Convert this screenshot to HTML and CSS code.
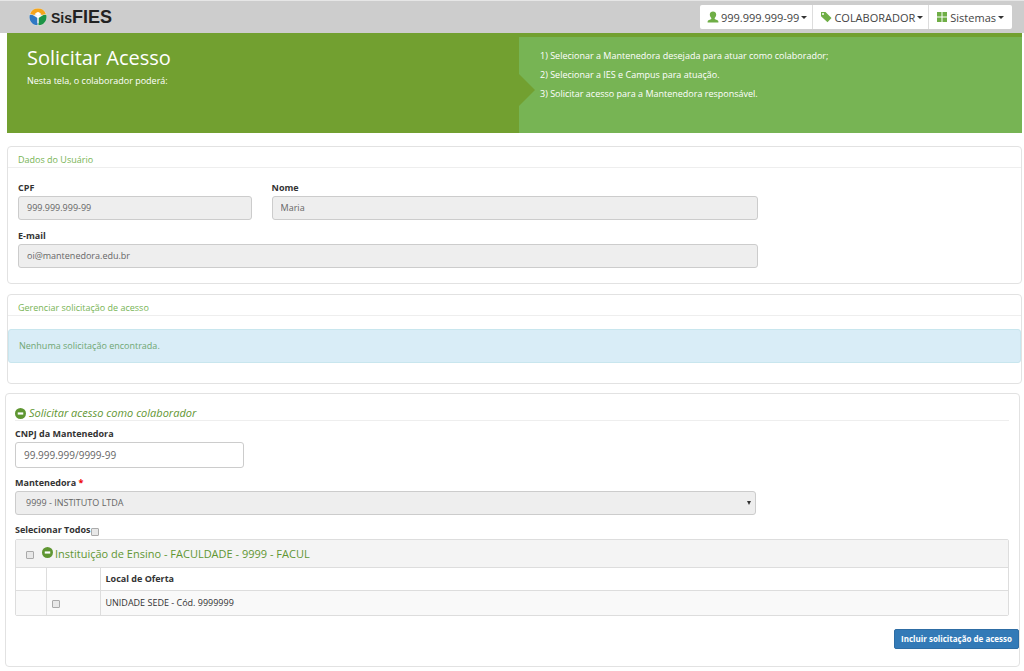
FILE: index.html
```html
<!DOCTYPE html>
<html lang="pt-BR">
<head>
<meta charset="utf-8">
<meta name="viewport" content="width=device-width, initial-scale=1">
<title>SisFIES - Solicitar Acesso</title>
<link rel="stylesheet" href="styles.css">
</head>
<body>
<header class="topbar">
  <a class="brand" href="#">
    <svg class="brand-mark" viewBox="0 0 18 18" aria-hidden="true">
      <circle cx="9" cy="9" r="9" fill="#e6e4dc"/>
      <path d="M1.200 6A8.300 8.300 0 0 1 16.800 6L12.500 7L11.500 5H6.500L5.500 7Z" fill="#f4a51c"/>
      <path d="M.8 6.800L3.500 7L8.500 10V17.300A8.300 8.300 0 0 1 .8 6.800Z" fill="#2f78c4"/>
      <path d="M17.200 6.800L14.500 7L9.500 10V17.300A8.300 8.300 0 0 0 17.200 6.800Z" fill="#1c9447"/>
      <circle cx="9" cy="6" r="2" fill="#fff"/>
      <path d="M5 7L9 8L13 7L9.500 9.800V15H8.500V9.800Z" fill="#fff"/>
    </svg>
    <span class="brand-sis">Sis</span><span class="brand-fies">FIES</span>
  </a>
  <nav class="menu" aria-label="Menu do usuário">
    <button class="menu-item" type="button">
      <svg class="icon" viewBox="0 0 12 12" aria-hidden="true"><path d="M6 .5C4.200 .5 2.800 1.700 2.800 3.500C2.800 5 3.500 6.300 4.300 7V8C3.300 8.600 .6 9.200 .6 10.400V11.500H11.400V10.400C11.400 9.200 8.700 8.600 7.700 8V7C8.500 6.300 9.200 5 9.200 3.500C9.200 1.700 7.800 .5 6 .5Z"/></svg>
      <span>999.999.999-99</span><span class="caret"></span>
    </button>
    <button class="menu-item" type="button">
      <svg class="icon" viewBox="0 0 12 12" aria-hidden="true"><path fill-rule="evenodd" d="M1 1H5.500L11.500 7L7.500 11.300L1 5.300ZM3 2A1 1 0 1 0 3 4A1 1 0 1 0 3 2Z"/></svg>
      <span>COLABORADOR</span><span class="caret"></span>
    </button>
    <button class="menu-item" type="button">
      <svg class="icon" viewBox="0 0 12 12" aria-hidden="true"><path d="M1 1H5.500V5.500H1ZM6.500 1H11V5.500H6.500ZM1 6.500H5.500V11H1ZM6.500 6.500H11V11H6.500Z"/></svg>
      <span>Sistemas</span><span class="caret"></span>
    </button>
  </nav>
</header>

<main class="page">
  <section class="banner">
    <div class="banner-intro">
      <h1 class="banner-title">Solicitar Acesso</h1>
      <p class="banner-text">Nesta tela, o colaborador poderá:</p>
    </div>
    <div class="banner-steps">
      <p class="step">1) Selecionar a Mantenedora desejada para atuar como colaborador;</p>
      <p class="step">2) Selecionar a IES e Campus para atuação.</p>
      <p class="step">3) Solicitar acesso para a Mantenedora responsável.</p>
    </div>
  </section>

  <section class="panel user-panel">
    <h2 class="panel-title">Dados do Usuário</h2>
    <div class="user-form">
      <div class="field">
        <label class="label" for="cpf">CPF</label>
        <input class="input" id="cpf" type="text" value="999.999.999-99" disabled>
      </div>
      <div class="field">
        <label class="label" for="nome">Nome</label>
        <input class="input" id="nome" type="text" value="Maria" disabled>
      </div>
      <div class="field field-wide">
        <label class="label" for="email">E-mail</label>
        <input class="input" id="email" type="text" value="oi@mantenedora.edu.br" disabled>
      </div>
    </div>
  </section>

  <section class="panel requests-panel">
    <h2 class="panel-title">Gerenciar solicitação de acesso</h2>
    <p class="notice">Nenhuma solicitação encontrada.</p>
  </section>

  <section class="panel access-panel">
    <h2 class="access-title">
      <svg class="minus" viewBox="0 0 12 12" aria-hidden="true"><circle cx="6" cy="6" r="6"/><path d="M3 4.800H9V7.200H3Z" fill="#fff"/></svg>
      <em>Solicitar acesso como colaborador</em>
    </h2>
    <div class="access-form">
      <div class="field">
        <label class="label" for="cnpj">CNPJ da Mantenedora</label>
        <input class="input input-cnpj" id="cnpj" type="text" value="99.999.999/9999-99">
      </div>
      <div class="field">
        <label class="label" for="mantenedora">Mantenedora <span class="required">*</span></label>
        <div class="select-wrap">
          <select class="input select" id="mantenedora" disabled><option>9999 - INSTITUTO LTDA</option></select>
        </div>
      </div>
      <div class="select-all">
        <label class="label" for="todos">Selecionar Todos</label><input class="check" id="todos" type="checkbox">
      </div>
    </div>
    <div class="institution">
      <div class="institution-head">
        <input class="check" type="checkbox" aria-label="Selecionar instituição">
        <svg class="minus" viewBox="0 0 12 12" aria-hidden="true"><circle cx="6" cy="6" r="6"/><path d="M3 4.800H9V7.200H3Z" fill="#fff"/></svg>
        <a class="institution-link" href="#">Instituição de Ensino - FACULDADE - 9999 - FACUL</a>
      </div>
      <table class="offers">
        <colgroup><col class="col-indent"><col class="col-check"><col></colgroup>
        <thead><tr><th></th><th></th><th scope="col">Local de Oferta</th></tr></thead>
        <tbody><tr><td></td><td><input class="check" type="checkbox" aria-label="Selecionar unidade sede"></td><td>UNIDADE SEDE - Cód. 9999999</td></tr></tbody>
      </table>
    </div>
    <div class="actions"><button class="submit" type="button">Incluir solicitação de acesso</button></div>
  </section>
</main>
</body>
</html>
```
FILE: styles.css
```css
* { box-sizing: border-box; }

body {
  margin: 0;
  background: #fff;
  color: #333;
  font: 9px/14px "Open Sans", sans-serif;
}

h1, h2, p { margin: 0; font-weight: 400; }
input, select, button { font-family: inherit; margin: 0; }

.topbar {
  display: flex;
  align-items: center;
  justify-content: space-between;
  height: 33px;
  padding: 0 12px 0 29px;
  background: #cdcdcd;
  border-top: 1px solid #e6e6e6;
}

.brand {
  display: flex;
  align-items: baseline;
  color: #222;
  font: bold 18px/20px "Liberation Sans", sans-serif;
  text-decoration: none;
}
.brand-mark { width: 18px; height: 18px; margin-right: 4px; align-self: center; }
.brand-sis { font-size: 14px; }

.menu { display: flex; border-radius: 2px; background: #fff; }
.menu-item {
  display: flex;
  align-items: center;
  gap: 2px;
  height: 24px;
  padding: 0 5px 0 7px;
  border: 0;
  border-left: 1px solid #ddd;
  background: none;
  color: #444;
  font-size: 11px;
}
.menu-item:first-child { border-left: 0; }
.menu-item:last-child { padding-right: 8px; }
.icon { width: 12px; height: 12px; fill: #6fae46; }
.caret {
  border: 3px solid transparent;
  border-top-color: #333;
  border-bottom: 0;
}

.page { padding: 0 2px 4px 7px; }

.banner {
  display: grid;
  grid-template-columns: 512fr 503fr;
  min-height: 100px;
  background: #72a030;
  color: #fff;
}
.banner-intro { padding: 12px 20px; }
.banner-title { font-size: 20px; line-height: 26px; }
.banner-text { margin-top: 3px; }
.banner-steps {
  position: relative;
  margin-top: 4px;
  padding: 9px 21px;
  background: #77b454;
}
.banner-steps::before {
  content: "";
  position: absolute;
  left: 0;
  top: 37px;
  border: 16px solid transparent;
  border-left-color: #72a030;
  border-right: 0;
}
.step { line-height: 19px; }

.panel {
  border: 1px solid #e2e2e2;
  border-radius: 4px;
}
.panel-title {
  padding: 6px 10px 0;
  border-bottom: 1px solid #eee;
  color: #77b454;
  font-size: 9px;
  line-height: 14px;
}

.user-panel { margin-top: 13px; padding-bottom: 15px; }
.user-form {
  display: grid;
  grid-template-columns: 234fr 487fr;
  gap: 8px 20px;
  width: 75%;
  padding: 12px 10px 0;
}
.field { display: flex; flex-direction: column; }
.field-wide { grid-column: 1 / -1; }
.label { font-weight: 700; line-height: 16px; }
.input {
  width: 100%;
  height: 24px;
  padding: 0 8px 2px;
  border: 1px solid #ccc;
  border-radius: 3px;
  background: #fff;
  color: #666;
  font-size: 9px;
}
.input:disabled { background: #eee; opacity: 1; }

.requests-panel { margin-top: 10px; padding-bottom: 20px; }
.notice {
  margin-top: 13px;
  padding: 9px 10px;
  border: 1px solid #c8e6ee;
  border-radius: 3px;
  background: #d9edf7;
  color: #6fa672;
}

.access-panel { margin: 9px 2px 0 -2px; padding: 12px 10px 17px 9px; }
.access-title {
  display: flex;
  align-items: center;
  gap: 3px;
  border-bottom: 1px solid #eee;
  margin-bottom: 5px;
  color: #5f9632;
  font-size: 11px;
  line-height: 14px;
}
.minus { width: 11px; height: 11px; fill: #5f9632; }
.access-form { display: grid; gap: 7px; }
.input-cnpj { width: 23%; height: 26px; padding-bottom: 0; font-size: 10px; }
.required { color: #e00; }
.select-wrap { position: relative; width: 74.5%; }
.select { appearance: none; padding-left: 10px; }
.select-wrap::after {
  content: "";
  position: absolute;
  right: 5px;
  top: 10px;
  border: 2px solid transparent;
  border-top: 4px solid #333;
  border-bottom: 0;
}
.select-all { display: flex; align-items: center; }
.check {
  appearance: none;
  width: 8px;
  height: 8px;
  margin-top: 3px;
  border: 1px solid #aaa;
  border-radius: 1px;
  background: #e8e8e8;
}
.check:checked { background: #337ab7; }

.institution {
  margin-top: 1px;
  border: 1px solid #ddd;
  border-radius: 2px;
}
.institution-head {
  display: flex;
  align-items: center;
  height: 27px;
  padding-left: 10px;
  background: #f4f4f4;
}
.institution-head .minus { margin: 0 2px 2px 8px; }
.institution-link { color: #5f9632; font-size: 11px; text-decoration: none; }

.offers { width: 100%; border-collapse: collapse; table-layout: fixed; }
.col-indent { width: 30px; }
.col-check { width: 54px; }
.offers th, .offers td {
  height: 24px;
  padding: 0 5px;
  border-top: 1px solid #ddd;
  text-align: left;
}
.offers th { height: 23px; }
.offers th + th, .offers td + td { border-left: 1px solid #ddd; }
.offers td { background: #f9f9f9; }
.offers .check { display: block; }

.actions { display: flex; justify-content: flex-end; margin: 13px -10px 0 0; }
.submit {
  height: 20px;
  padding: 0 6px;
  border: 1px solid #2e6da4;
  border-radius: 2px;
  background: #337ab7;
  color: #fff;
  font-size: 8px;
  font-weight: 700;
}
```
